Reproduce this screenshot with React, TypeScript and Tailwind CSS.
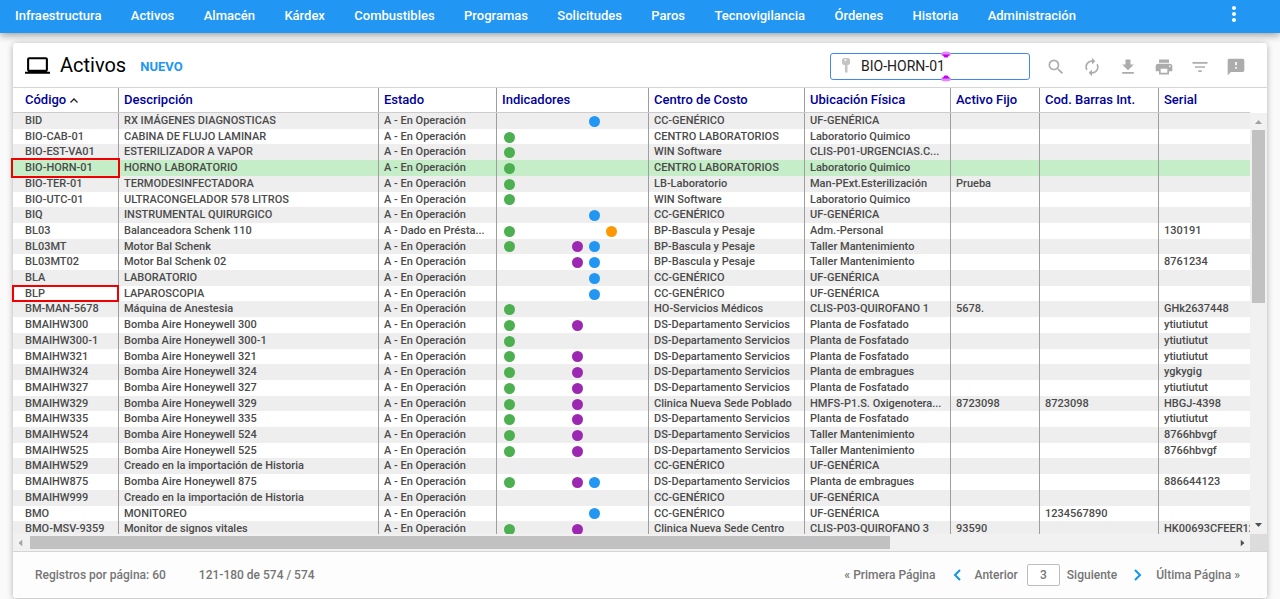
import { MdSearch, MdAutorenew, MdFileDownload, MdPrint, MdFilterList, MdMoreVert, MdFeedback, MdLaptop } from "react-icons/md";

type Dot = "green" | "purple" | "blue" | "orange";

type Asset = {
  code: string;
  name: string;
  status?: string;
  dots: Dot[];
  center: string;
  place: string;
  fixed?: string;
  barcode?: string;
  serial?: string;
};

const menu = [
  "Infraestructura",
  "Activos",
  "Almacén",
  "Kárdex",
  "Combustibles",
  "Programas",
  "Solicitudes",
  "Paros",
  "Tecnovigilancia",
  "Órdenes",
  "Historia",
  "Administración",
];

const columns = [
  "Código",
  "Descripción",
  "Estado",
  "Indicadores",
  "Centro de Costo",
  "Ubicación Física",
  "Activo Fijo",
  "Cod. Barras Int.",
  "Serial",
];

const DS = "DS-Departamento Servicios";
const CC = "CC-GENÉRICO";
const UF = "UF-GENÉRICA";

const assets: Asset[] = [
  { code: "BID", name: "RX IMÁGENES DIAGNOSTICAS", dots: ["blue"], center: CC, place: UF },
  { code: "BIO-CAB-01", name: "CABINA DE FLUJO LAMINAR", dots: ["green"], center: "CENTRO LABORATORIOS", place: "Laboratorio Quimico" },
  { code: "BIO-EST-VA01", name: "ESTERILIZADOR A VAPOR", dots: ["green"], center: "WIN Software", place: "CLIS-P01-URGENCIAS.C..." },
  { code: "BIO-HORN-01", name: "HORNO LABORATORIO", dots: ["green"], center: "CENTRO LABORATORIOS", place: "Laboratorio Quimico" },
  { code: "BIO-TER-01", name: "TERMODESINFECTADORA", dots: ["green"], center: "LB-Laboratorio", place: "Man-PExt.Esterilización", fixed: "Prueba" },
  { code: "BIO-UTC-01", name: "ULTRACONGELADOR 578 LITROS", dots: ["green"], center: "WIN Software", place: "Laboratorio Quimico" },
  { code: "BIQ", name: "INSTRUMENTAL QUIRURGICO", dots: ["blue"], center: CC, place: UF },
  { code: "BL03", name: "Balanceadora Schenk 110", status: "A - Dado en Présta...", dots: ["green", "orange"], center: "BP-Bascula y Pesaje", place: "Adm.-Personal", serial: "130191" },
  { code: "BL03MT", name: "Motor Bal Schenk", dots: ["green", "purple", "blue"], center: "BP-Bascula y Pesaje", place: "Taller Mantenimiento" },
  { code: "BL03MT02", name: "Motor Bal Schenk 02", dots: ["purple", "blue"], center: "BP-Bascula y Pesaje", place: "Taller Mantenimiento", serial: "8761234" },
  { code: "BLA", name: "LABORATORIO", dots: ["blue"], center: CC, place: UF },
  { code: "BLP", name: "LAPAROSCOPIA", dots: ["blue"], center: CC, place: UF },
  { code: "BM-MAN-5678", name: "Máquina de Anestesia", dots: ["green"], center: "HO-Servicios Médicos", place: "CLIS-P03-QUIROFANO 1", fixed: "5678.", serial: "GHk2637448" },
  { code: "BMAIHW300", name: "Bomba Aire Honeywell 300", dots: ["green", "purple"], center: DS, place: "Planta de Fosfatado", serial: "ytiutiutut" },
  { code: "BMAIHW300-1", name: "Bomba Aire Honeywell 300-1", dots: ["green"], center: DS, place: "Planta de Fosfatado", serial: "ytiutiutut" },
  { code: "BMAIHW321", name: "Bomba Aire Honeywell 321", dots: ["green", "purple"], center: DS, place: "Planta de Fosfatado", serial: "ytiutiutut" },
  { code: "BMAIHW324", name: "Bomba Aire Honeywell 324", dots: ["green", "purple"], center: DS, place: "Planta de embragues", serial: "ygkygig" },
  { code: "BMAIHW327", name: "Bomba Aire Honeywell 327", dots: ["green", "purple"], center: DS, place: "Planta de Fosfatado", serial: "ytiutiutut" },
  { code: "BMAIHW329", name: "Bomba Aire Honeywell 329", dots: ["green", "purple"], center: "Clinica Nueva Sede Poblado", place: "HMFS-P1.S. Oxigenotera...", fixed: "8723098", barcode: "8723098", serial: "HBGJ-4398" },
  { code: "BMAIHW335", name: "Bomba Aire Honeywell 335", dots: ["green", "purple"], center: DS, place: "Planta de Fosfatado", serial: "ytiutiutut" },
  { code: "BMAIHW524", name: "Bomba Aire Honeywell 524", dots: ["green", "purple"], center: DS, place: "Taller Mantenimiento", serial: "8766hbvgf" },
  { code: "BMAIHW525", name: "Bomba Aire Honeywell 525", dots: ["green", "purple"], center: DS, place: "Taller Mantenimiento", serial: "8766hbvgf" },
  { code: "BMAIHW529", name: "Creado en la importación de Historia", dots: [], center: CC, place: UF },
  { code: "BMAIHW875", name: "Bomba Aire Honeywell 875", dots: ["green", "purple", "blue"], center: DS, place: "Planta de embragues", serial: "886644123" },
  { code: "BMAIHW999", name: "Creado en la importación de Historia", dots: [], center: CC, place: UF },
  { code: "BMO", name: "MONITOREO", dots: ["blue"], center: CC, place: UF, barcode: "1234567890" },
  { code: "BMO-MSV-9359", name: "Monitor de signos vitales", dots: ["green", "purple"], center: "Clinica Nueva Sede Centro", place: "CLIS-P03-QUIROFANO 3", fixed: "93590", serial: "HK00693CFEER123" },
];

// one slot per indicator, empty slots keep their width
const slots: (Dot | null)[] = ["green", null, null, null, "purple", "blue", "orange"];

const dotColor: Record<Dot, string> = {
  green: "bg-[#4caf50]",
  purple: "bg-[#9c27b0]",
  blue: "bg-[#2196f3]",
  orange: "bg-[#ff9800]",
};

const rowGrid =
  "grid grid-cols-[106px_260px_118px_152px_156px_146px_89px_119px_minmax(0,1fr)]";

const cell = "truncate border-r border-[#9e9e9e] pl-[5px] pr-1 first:pl-3";

const actions = [
  { label: "Buscar", Icon: MdSearch },
  { label: "Actualizar", Icon: MdAutorenew },
  { label: "Descargar", Icon: MdFileDownload },
  { label: "Imprimir", Icon: MdPrint },
  { label: "Filtrar", Icon: MdFilterList },
  { label: "Comentarios", Icon: MdFeedback },
];

function Indicators({ dots }: { dots: Dot[] }) {
  return (
    <div className="flex h-full items-center gap-[6px] pl-[2px] pt-px">
      {slots.map((slot, i) => (
        <span
          key={i}
          className={`size-[11px] shrink-0 rounded-full ${slot && dots.includes(slot) ? dotColor[slot] : ""}`}
        />
      ))}
    </div>
  );
}

function Row({ asset, index }: { asset: Asset; index: number }) {
  const selected = asset.code === "BIO-HORN-01";
  const marked = selected || asset.code === "BLP";
  const background = selected ? "bg-[#c5edc7]" : index % 2 === 0 ? "bg-[#eeeeee]" : "bg-white";

  return (
    <tr className={`${rowGrid} relative ${marked ? "z-10" : ""} ${background}`}>
      <td className={cell}>
        {asset.code}
        {marked && (
          <span
            className={`absolute border-2 border-[#f00000] ${selected ? "-inset-y-[2px] -left-[2px] w-[109px]" : "-inset-y-px -left-px w-[107px]"}`}
          />
        )}
      </td>
      <td className={cell}>{asset.name}</td>
      <td className={cell}>{asset.status ?? "A - En Operación"}</td>
      <td className={cell}>
        <Indicators dots={asset.dots} />
      </td>
      <td className={cell}>{asset.center}</td>
      <td className={cell}>{asset.place}</td>
      <td className={cell}>{asset.fixed}</td>
      <td className={cell}>{asset.barcode}</td>
      <td className="overflow-hidden whitespace-nowrap pl-[5px]">{asset.serial}</td>
    </tr>
  );
}

function Handle({ className }: { className: string }) {
  return (
    <svg viewBox="0 0 10 7" className={`absolute h-[7px] w-[10px] ${className}`}>
      <ellipse cx="5" cy="3" rx="5" ry="2.500" fill="#e08cf5" />
      <path d="M1.500 3.500h7L6.500 6.500h-3z" fill="#c400f0" />
    </svg>
  );
}

function Arrow({ className }: { className: string }) {
  return (
    <svg viewBox="0 0 7 4" className={`h-1 w-[7px] fill-current ${className}`}>
      <path d="M0 4h7L3.500 0z" />
    </svg>
  );
}

function Chevron({ className }: { className: string }) {
  return (
    <svg viewBox="0 0 8 12" className={`h-3 w-2 ${className}`} fill="none" stroke="#1296e8" strokeWidth="2">
      <path d="M7 1 2 6l5 5" />
    </svg>
  );
}

export default function App() {
  return (
    <div className="bg-[#fafafa] pb-px font-['Roboto',sans-serif]">
      {/* Menu */}
      <header className="relative flex h-[33px] items-center justify-between bg-[#2196f3] pb-[2px] pl-[15px] pr-[34px] text-white shadow-[0_2px_8px_rgba(0,0,0,0.4)]">
        <nav className="flex w-[1061px] justify-between text-[13px] font-medium leading-4">
          {menu.map((item) => (
            <a key={item} href="#">
              {item}
            </a>
          ))}
        </nav>
        <button aria-label="Más opciones" className="-mt-1">
          <MdMoreVert size={24} />
        </button>
      </header>

      <main className="mx-[13px] mt-[10px] rounded-[3px] bg-white shadow-[0_1px_6px_rgba(0,0,0,0.3)]">
        {/* Title and search */}
        <div className="flex h-[45px] items-center border-b border-[#d5d5d5] pl-3 pr-[21px]">
          <MdLaptop size={25} className="text-black" />
          <h1 className="ml-[10px] text-xl text-black">Activos</h1>
          <button className="ml-[14px] mt-[3px] text-[13px] font-bold text-[#2196f3]">NUEVO</button>

          <div className="relative ml-auto mt-[2px] h-[27px] w-[200px]">
            <input
              aria-label="Buscar activo"
              defaultValue="BIO-HORN-01"
              className="h-full w-full rounded-[3px] border border-[#4285f4] bg-white pl-[30px] text-sm text-[#212121] outline-none"
            />
            <svg viewBox="0 0 8 16" className="absolute left-[12px] top-[5px] h-4 w-2" fill="#c4c4c4">
              <path d="M1.500 0h5L8 1.500v4L6.500 7H5.500v7L4.500 15 3 14V7H1.500L0 5.500v-4z" />
              <circle cx="3.500" cy="2" r="1" fill="#fff" />
            </svg>
            <Handle className="-top-[2px] left-[111px]" />
            <Handle className="-bottom-[2px] left-[111px] rotate-180" />
          </div>

          <div className="ml-4 mt-1 flex gap-4 text-[#acacac]">
            {actions.map(({ label, Icon }) => (
              <button key={label} aria-label={label}>
                <Icon size={20} />
              </button>
            ))}
          </div>
        </div>

        {/* Grid */}
        <div className="grid grid-cols-[minmax(0,1fr)_17px]">
          <table className="block h-[446px] overflow-x-visible overflow-y-clip">
            <thead className="block border-b border-[#cccccc] text-[13px] font-medium leading-6 text-[#000099]">
              <tr className={rowGrid}>
                {columns.map((column, i) => (
                  <th
                    key={column}
                    className="flex items-center border-r border-[#9e9e9e] pl-[5px] text-left font-medium first:pl-3 last:border-r-0"
                  >
                    {column}
                    {i === 0 && (
                      <svg viewBox="0 0 8 5" className="ml-1 mt-px h-[5px] w-2" fill="none" stroke="#222">
                        <path d="M.5 4.500 4 1l3.500 3.500" strokeWidth="1.300" />
                      </svg>
                    )}
                  </th>
                ))}
              </tr>
            </thead>
            <tbody className="grid h-[424px] auto-rows-fr text-[11px] font-medium leading-[15px] text-[#4a4a4a]">
              {assets.map((asset, i) => (
                <Row key={asset.code} asset={asset} index={i} />
              ))}
            </tbody>
          </table>

          <div className="mt-[25px] flex flex-col items-center bg-[#f1f1f1] py-[7px]">
            <Arrow className="text-[#a3a3a3]" />
            <div className="mt-[6px] h-[173px] w-[13px] bg-[#c1c1c1]" />
            <Arrow className="mt-auto rotate-180 text-[#505050]" />
          </div>

          <div className="flex h-[17px] items-center bg-[#f1f1f1] px-1">
            <Arrow className="-rotate-90 text-[#a3a3a3]" />
            <div className="ml-[6px] h-[13px] w-[70%] bg-[#c1c1c1]" />
            <Arrow className="ml-auto rotate-90 text-[#505050]" />
          </div>
          <div className="bg-[#dcdcdc]" />
        </div>

        {/* Pagination */}
        <footer className="flex h-[47px] items-center rounded-b-[3px] border-t border-[#d5d5d5] bg-[#fdfdfd] pl-[22px] pr-[27px] text-xs font-medium text-[#757575]">
          <span>Registros por página: 60</span>
          <span className="ml-[33px]">121-180 de 574 / 574</span>
          <a href="#" className="ml-auto">
            « Primera Página
          </a>
          <a href="#" className="ml-[17px] flex items-center gap-[14px]">
            <Chevron className="" />
            Anterior
          </a>
          <input
            aria-label="Página"
            defaultValue="3"
            className="ml-[9px] h-[22px] w-[33px] rounded-[2px] border border-[#bdbdbd] bg-white text-center outline-none"
          />
          <a href="#" className="ml-[7px] flex items-center gap-[17px]">
            Siguiente
            <Chevron className="rotate-180" />
          </a>
          <a href="#" className="ml-[14px]">
            Última Página »
          </a>
        </footer>
      </main>
    </div>
  );
}
